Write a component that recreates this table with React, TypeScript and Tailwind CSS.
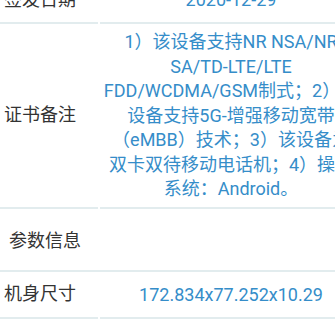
import React from 'react';

const font = 'font-["Roboto","Noto_Sans_CJK_SC",sans-serif]';

function Row({ label, children, tall }: { label: string; children: React.ReactNode; tall?: boolean }) {
  return (
    <div className="grid grid-cols-[98px_262px] gap-x-[2px]">
      <div className="flex items-center border-b-2 border-[#e2ecee] pl-[4px] text-[#333333]">{label}</div>
      <div
        className={`flex items-center justify-center border-b-2 border-[#e2ecee] px-[3px] text-center text-[#358dc9] ${
          tall ? 'pt-[6px] pb-[5px] leading-[24.5px]' : 'pt-[11px] pb-[10px]'
        }`}
      >
        <p>{children}</p>
      </div>
    </div>
  );
}

export default function App() {
  return (
    <div className={`w-[335px] h-[325px] overflow-hidden bg-white ${font} text-[18px] leading-[24px]`}>
      <div className="-mt-[23px] w-[362px]">
        <Row label="签发日期">2020-12-29</Row>
        <Row tall label="证书备注">
          1）该设备支持NR NSA/NR SA/TD-LTE/LTE FDD/WCDMA/GSM制式；2）该设备支持5G-增强移动宽带（eMBB）技术；3）该设备为
          <span className="whitespace-nowrap">双卡</span>双待移动电话机；4）操作系统：Android。
        </Row>

        {/* Section header */}
        <div className="border-b-2 border-[#e2ecee] pt-[20px] pb-[17px] pl-[9px] text-[#333333]">参数信息</div>

        <Row label="机身尺寸">172.834x77.252x10.29</Row>
      </div>
    </div>
  );
}
